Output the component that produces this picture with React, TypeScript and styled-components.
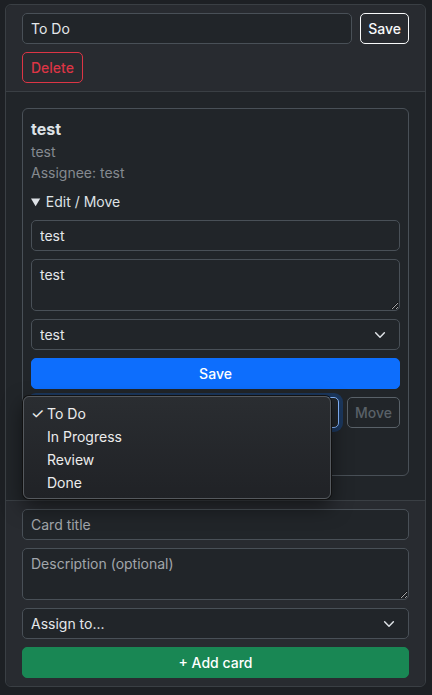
import styled, { createGlobalStyle, css } from 'styled-components';

const STATUSES = ['To Do', 'In Progress', 'Review', 'Done'];

function Chevron() {
  return (
    <ChevronIcon viewBox="0 0 16 16" aria-hidden>
      <path d="m3 5.5 5 5 5-5" fill="none" stroke="#dee2e6" strokeWidth="1.7" strokeLinecap="round" strokeLinejoin="round" />
    </ChevronIcon>
  );
}

function Select({ value, focused, grow }: { value: string; focused?: boolean; grow?: boolean }) {
  return (
    <SelectWrap $grow={grow}>
      <SelectBox $focused={focused} value={value} onChange={() => {}}>
        <option>{value}</option>
      </SelectBox>
      {focused ? null : <Chevron />}
    </SelectWrap>
  );
}

function App() {
  return (
    <>
      <GlobalStyle />
      <Page>
        <Column>
          <Header>
            <NameRow>
              <Input $grow defaultValue="To Do" />
              <Button $variant="light">Save</Button>
            </NameRow>
            <div>
              <Button $variant="danger">Delete</Button>
            </div>
          </Header>

          <Body>
            <Card>
              <CardTitle>test</CardTitle>
              <Muted>test</Muted>
              <Muted>Assignee: test</Muted>
              <Details open>
                <Summary>Edit / Move</Summary>
                <EditForm>
                  <Input defaultValue="test" />
                  <TextArea defaultValue="test" />
                  <Select value="test" />
                  <Button $variant="primary" $block>
                    Save
                  </Button>
                  <MoveRow>
                    <Select value="To Do" focused grow />
                    <Button $variant="secondary" disabled>
                      Move
                    </Button>
                    <Popup>
                      {STATUSES.map((s, i) => (
                        <PopupItem key={s}>
                          <Check>{i === 0 ? '✓' : ''}</Check>
                          {s}
                        </PopupItem>
                      ))}
                    </Popup>
                  </MoveRow>
                  <Spacer />
                </EditForm>
              </Details>
            </Card>
          </Body>

          <Footer>
            <Input placeholder="Card title" />
            <TextArea placeholder="Description (optional)" />
            <Select value="Assign to..." />
            <Button $variant="success" $block>
              + Add card
            </Button>
          </Footer>
        </Column>
      </Page>
    </>
  );
}

export default App;

const GlobalStyle = createGlobalStyle`
  * { box-sizing: border-box; }
  html, body {
    margin: 0;
    background: #1d2024;
  }
  body {
    font-family: Inter, "Noto Sans", sans-serif;
    font-size: 14px;
    color: #dee2e6;
  }
`;

const Page = styled.div`
  padding: 4px 6px 8px 5px;
`;

const Column = styled.section`
  background: #212529;
  border: 1px solid #3a3f44;
  border-radius: 6px;
`;

const Header = styled.div`
  display: flex;
  flex-direction: column;
  gap: 8px;
  padding: 8px 16px;
  background: #282b30;
  border-bottom: 1px solid #3a3f44;
  border-radius: 6px 6px 0 0;
`;

const NameRow = styled.div`
  display: flex;
  gap: 8px;
`;

const fieldBase = css`
  width: 100%;
  font-family: inherit;
  font-size: 14px;
  color: #e4e7ea;
  background: #212529;
  border: 1px solid #495057;
  border-radius: 5px;
  padding: 4px 8px;
  outline: none;
  &::placeholder {
    color: #a2a6ab;
  }
`;

const Input = styled.input<{ $grow?: boolean }>`
  ${fieldBase};
  height: 31px;
  flex: ${(p) => (p.$grow ? '1' : 'none')};
`;

const TextArea = styled.textarea`
  ${fieldBase};
  flex: none;
  height: 52px;
  line-height: 21px;
  resize: vertical;
  display: block;
`;

const SelectWrap = styled.div<{ $grow?: boolean }>`
  position: relative;
  flex: ${(p) => (p.$grow ? '1' : 'none')};
`;

const SelectBox = styled.select<{ $focused?: boolean }>`
  ${fieldBase};
  height: 31px;
  appearance: none;
  padding-right: 32px;
  ${(p) =>
    p.$focused &&
    css`
      border-color: #86b7fe;
      box-shadow: 0 0 0 4px rgba(13, 110, 253, 0.25);
    `}
`;

const ChevronIcon = styled.svg`
  position: absolute;
  right: 13px;
  top: 9px;
  width: 14px;
  height: 14px;
  pointer-events: none;
`;

const variants = {
  light: css`
    color: #f8f9fa;
    border-color: #f8f9fa;
    background: transparent;
  `,
  danger: css`
    color: #dc3545;
    border-color: #dc3545;
    background: transparent;
    padding: 0 8px;
  `,
  secondary: css`
    color: #6c757d;
    border-color: #6c757d;
    background: transparent;
    opacity: 0.75;
  `,
  primary: css`
    color: #fff;
    border-color: #0d6efd;
    background: #0d6efd;
  `,
  success: css`
    color: #fff;
    border-color: #198754;
    background: #198754;
  `,
};

const Button = styled.button<{ $variant: keyof typeof variants; $block?: boolean }>`
  font-family: inherit;
  font-size: 14px;
  font-weight: 500;
  height: 31px;
  padding: 0 7px;
  border: 1px solid;
  border-radius: 5px;
  cursor: pointer;
  flex: none;
  ${(p) => variants[p.$variant]};
  ${(p) => p.$block && 'width: 100%;'}
`;

const Body = styled.div`
  padding: 16px;
`;

const Card = styled.div`
  border: 1px solid #495057;
  border-radius: 6px;
  padding: 8px;
  margin-bottom: 8px;
`;

const CardTitle = styled.div`
  font-size: 16px;
  font-weight: 700;
  line-height: 24px;
`;

const Muted = styled.div`
  color: #858a90;
  line-height: 21px;
`;

const Details = styled.details`
  margin-top: 8px;
`;

const Summary = styled.summary`
  line-height: 21px;
  cursor: pointer;
`;

const EditForm = styled.div`
  display: flex;
  flex-direction: column;
  gap: 8px;
  margin-top: 8px;
`;

const MoveRow = styled.div`
  position: relative;
  display: flex;
  gap: 8px;
`;

const Spacer = styled.div`
  height: 31px;
`;

const Popup = styled.div`
  position: absolute;
  left: -8px;
  top: -1px;
  width: 308px;
  padding: 5px 0 4px;
  background: linear-gradient(180deg, #2a2d31, #202226);
  border: 1px solid #55595e;
  border-radius: 6px;
  box-shadow: 0 0 0 1px #111, 0 8px 20px rgba(0, 0, 0, 0.5);
  z-index: 10;
`;

const PopupItem = styled.div`
  display: flex;
  align-items: center;
  height: 23px;
  padding-left: 7px;
  color: #ececec;
  font-size: 14px;
`;

const Check = styled.span`
  width: 16px;
  font-size: 15px;
`;

const Footer = styled.div`
  display: flex;
  flex-direction: column;
  gap: 8px;
  padding: 8px 16px;
  background: #282b30;
  border-top: 1px solid #3a3f44;
  border-radius: 0 0 6px 6px;
`;
